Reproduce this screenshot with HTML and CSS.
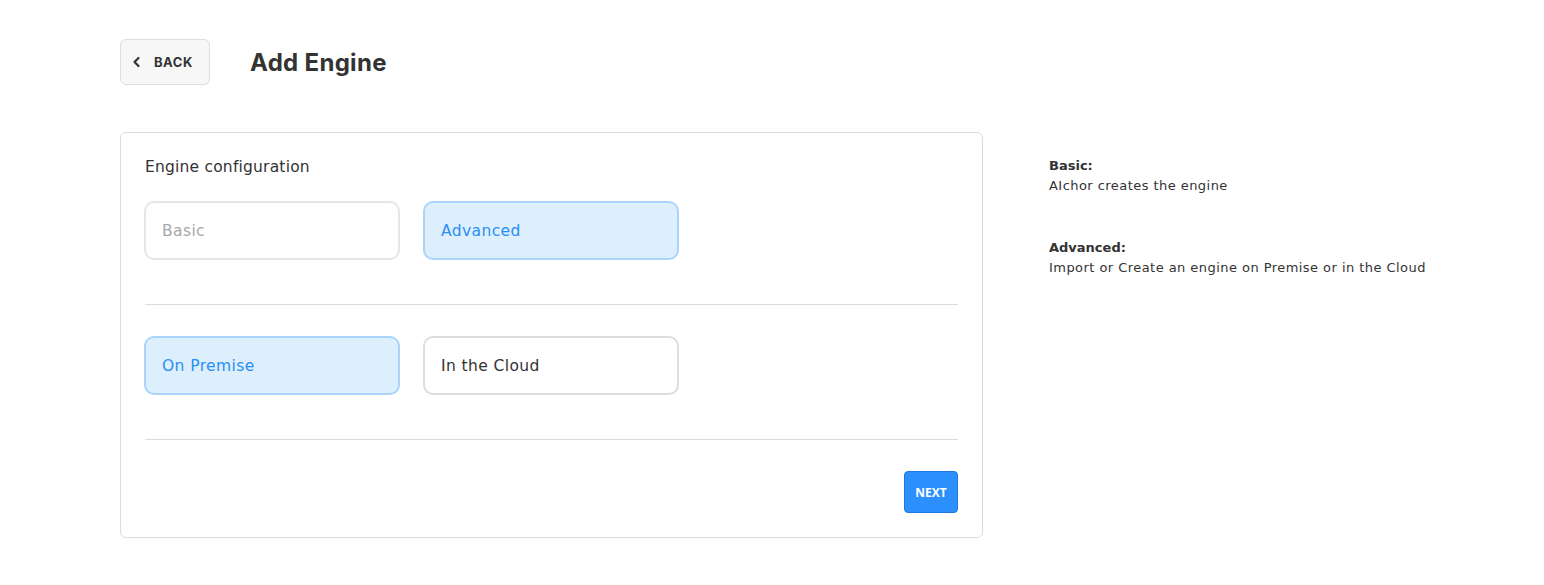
FILE: index.html
```html
<!DOCTYPE html>
<html lang="en">
<head>
    <meta charset="UTF-8">
    <meta name="viewport" content="width=device-width, initial-scale=1.0">
    <title>Add Engine</title>
    <link rel="stylesheet" href="styles.css">
</head>
<body>
    <div class="page">
        <div class="header">
            <button class="back-btn" type="button">
                <svg width="10" height="12" viewBox="0 0 10 12" class="back-icon">
                    <path d="M6.5 2 L2.5 6 L6.5 10" fill="none" stroke="#333" stroke-width="2.2" stroke-linecap="round" stroke-linejoin="round"/>
                </svg>
                BACK
            </button>
            <h1 class="title">Add Engine</h1>
        </div>

        <div class="content">
            <div class="card">
                <div class="card-label">Engine configuration</div>
                <div class="options">
                    <div class="option disabled">Basic</div>
                    <div class="option selected">Advanced</div>
                </div>
                <hr class="divider">
                <div class="options">
                    <div class="option selected">On Premise</div>
                    <div class="option">In the Cloud</div>
                </div>
                <hr class="divider">
                <div class="card-footer">
                    <button class="next-btn" type="button">NEXT</button>
                </div>
            </div>

            <div class="help">
                <div class="help-item">
                    <b>Basic:</b>
                    <p>AIchor creates the engine</p>
                </div>
                <div class="help-item">
                    <b>Advanced:</b>
                    <p>Import or Create an engine on Premise or in the Cloud</p>
                </div>
            </div>
        </div>
    </div>
</body>
</html>
```

FILE: styles.css
```css
* {
    box-sizing: border-box;
}

body {
    margin: 0;
    background: #fff;
    color: #333;
    font-family: "DejaVu Sans", sans-serif;
}

.page {
    padding: 39px 0 0 120px;
}

/* top bar */
.header {
    display: flex;
    align-items: center;
    height: 46px;
}

.back-btn {
    display: flex;
    align-items: center;
    gap: 12px;
    height: 46px;
    width: 90px;
    padding: 0 0 0 11px;
    background: #f7f7f7;
    border: 1px solid #dedede;
    border-radius: 6px;
    font-family: Inter, sans-serif;
    font-size: 13px;
    font-weight: 700;
    letter-spacing: 0.5px;
    color: #333;
}

.title {
    margin: 0 0 0 40px;
    font-family: Inter, sans-serif;
    font-size: 24px;
    font-weight: 700;
    letter-spacing: 0.3px;
    color: #333;
}

.content {
    display: flex;
    align-items: flex-start;
    margin-top: 47px;
}

/* card */
.card {
    flex: none;
    width: 863px;
    padding: 23px 24px 24px 23px;
    border: 1px solid #dcdcdc;
    border-radius: 6px;
}

.card-label {
    font-size: 15.5px;
    line-height: 22px;
    letter-spacing: 0.2px;
    margin: 0 0 23px 1px;
}

.options {
    display: flex;
    gap: 23px;
}

.option {
    width: 256px;
    height: 59px;
    padding-left: 16px;
    display: flex;
    align-items: center;
    border: 2px solid #dddddd;
    border-radius: 10px;
    font-size: 15.5px;
    letter-spacing: 0.4px;
    color: #333;
}

.option.disabled {
    border-color: #e6e6e6;
    color: #a8a8a8;
}

.option.selected {
    background: #ddeefd;
    border-color: #abd4fb;
    color: #2a8ff4;
}

.divider {
    border: none;
    border-top: 1px solid #dcdcdc;
    margin: 44px 0 31px 1px;
}

.card-footer {
    display: flex;
    justify-content: flex-end;
}

.next-btn {
    width: 54px;
    height: 42px;
    background: #2b90fc;
    border: 1px solid #1f78de;
    border-radius: 4px;
    color: #fff;
    font-family: "Open Sans", sans-serif;
    font-size: 12px;
    font-weight: 700;
    padding: 0;
}

/* right column */
.help {
    margin-left: 66px;
    padding-top: 24px;
    font-size: 13px;
    line-height: 20px;
    white-space: nowrap;
}

.help-item {
    margin-bottom: 42px;
}

.help-item b {
    font-weight: 700;
}

.help-item p {
    margin: 0;
    letter-spacing: 0.45px;
}
```
